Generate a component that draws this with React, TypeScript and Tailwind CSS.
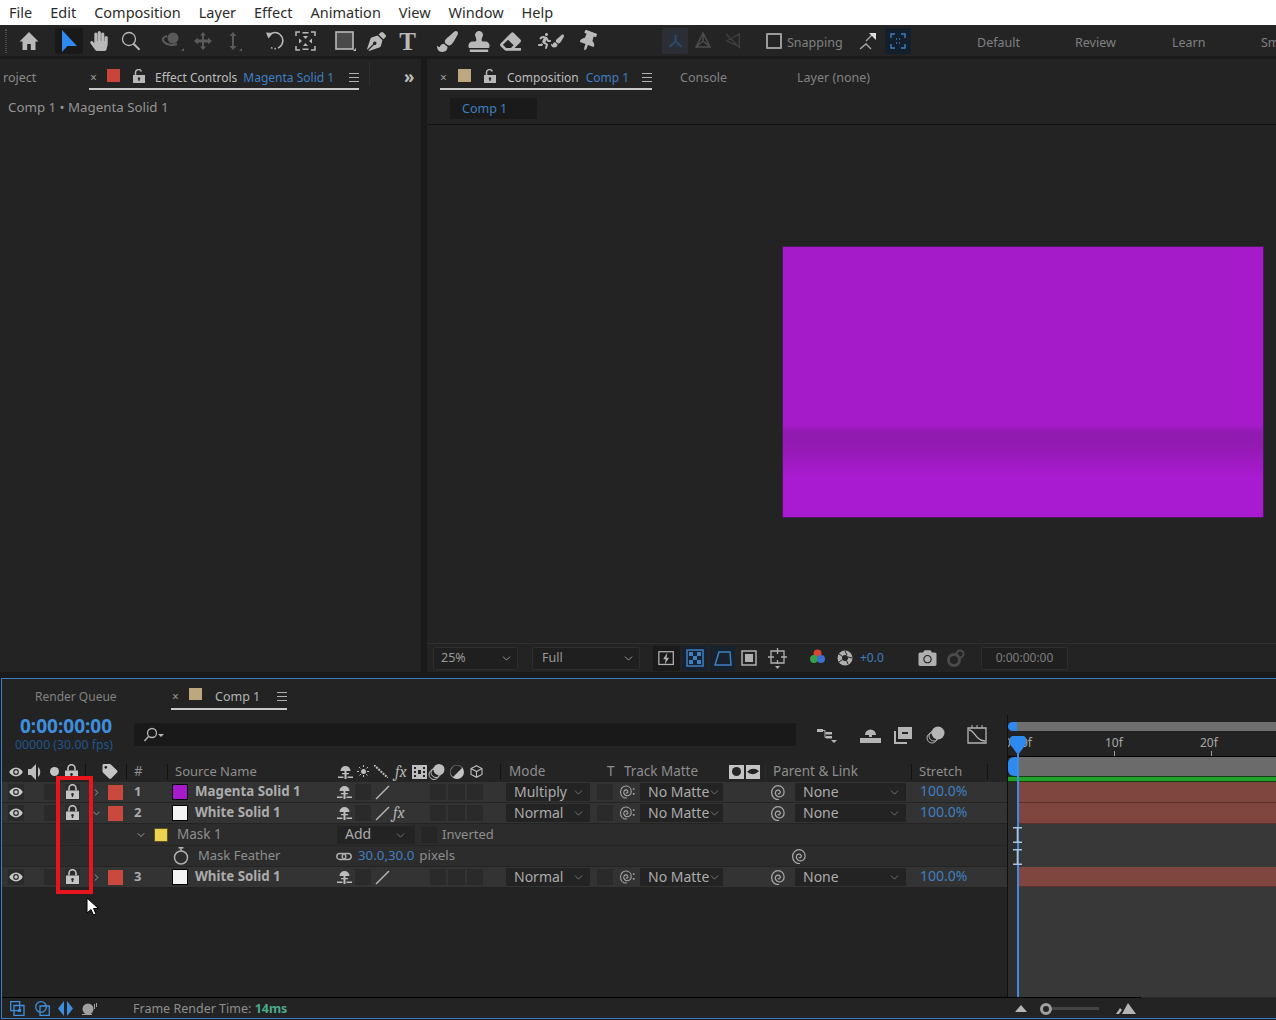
import type { ReactNode } from "react";
import { ChevronDown, ChevronRight } from "lucide-react";
import { FaCamera, FaEraser, FaHandPaper, FaPaintBrush, FaPenNib, FaRunning, FaStamp, FaTag, FaThumbtack } from "react-icons/fa";

const FONT = { fontFamily: '"Noto Sans", "Open Sans", sans-serif' };

function Ic({ c, v = "0 0 20 20", children }: { c: string; v?: string; children: ReactNode }) {
  return (
    <svg viewBox={v} className={`shrink-0 ${c}`} fill="currentColor">
      {children}
    </svg>
  );
}

function Burger({ c }: { c: string }) {
  return (
    <div className={`flex h-[9px] w-[10px] shrink-0 flex-col justify-between ${c}`}>
      <div className="h-px bg-[#b0b0b0]" />
      <div className="h-px bg-[#b0b0b0]" />
      <div className="h-px bg-[#b0b0b0]" />
    </div>
  );
}

function Unlock({ c }: { c: string }) {
  return (
    <Ic c={`h-[14px] w-[12px] text-[#b8b8b8] ${c}`} v="0 0 12 14">
      <path d="M0 6h12v8H0zM6 8.2a1.4 1.4 0 0 0-.6 2.6V12h1.2v-1.2A1.4 1.4 0 0 0 6 8.2z" fillRule="evenodd" />
      <path d="M2.5 6V3.5a3 3 0 0 1 5.8-1" fill="none" stroke="currentColor" strokeWidth="1.5" />
    </Ic>
  );
}

function Lock({ c = "" }: { c?: string }) {
  return (
    <Ic c={`h-[15px] w-[13px] text-[#c4c4c4] ${c}`} v="0 0 13 15">
      <path d="M0 6.5h13V15H0zM6.5 9a1.4 1.4 0 0 0-.7 2.6V13h1.4v-1.4A1.4 1.4 0 0 0 6.5 9z" fillRule="evenodd" />
      <path d="M3 6.5V4.2a3.5 3.5 0 0 1 7 0v2.3" fill="none" stroke="currentColor" strokeWidth="1.6" />
    </Ic>
  );
}

function Eye({ c = "" }: { c?: string }) {
  return (
    <Ic c={`h-[10px] w-[14px] text-[#c8c8c8] ${c}`} v="0 0 14 10">
      <path d="M7 .5C3.8.5 1.4 2.8.2 5c1.2 2.2 3.6 4.5 6.8 4.5s5.6-2.3 6.8-4.5C12.600 2.800 10.200.5 7 .5zm0 1.600a2.900 2.900 0 1 1 0 5.800 2.900 2.900 0 0 1 0-5.800z" fillRule="evenodd" />
      <circle cx="7" cy="5" r="1.700" />
    </Ic>
  );
}

function Shy({ c = "" }: { c?: string }) {
  return (
    <Ic c={`h-[14px] w-[15px] text-[#bdbdbd] ${c}`} v="0 0 15 14">
      <path d="M2.500 6a5 5 0 0 1 10 0z" />
      <path d="M6.500 6h2v8h-2zM4 8h7v1.300H4zM0 11.500h5.500V13H0zM9.500 11.500H15V13H9.500z" />
    </Ic>
  );
}

function Spiral({ c = "", dots = false }: { c?: string; dots?: boolean }) {
  return (
    <Ic c={`h-[15px] w-[15px] text-[#a8a8a8] ${c}`} v={dots ? "1 1.500 14 13" : "1 1.500 12 12"}>
      <path
        d="M6.800 8.500c1 .3 1.900-.6 1.500-1.800C7.900 5.500 6 5 5 6.300c-1 1.500-.5 4 1.800 4.600 2.500.6 4.700-1.200 4.700-3.900C11.500 4 9.300 2 6.700 2 3.800 2 1.500 4.300 1.500 7.500c0 3.300 2.300 5.700 5.500 5.700"
        fill="none"
        stroke="currentColor"
        strokeWidth="1"
        strokeLinecap="round"
      />
      {dots && <path d="M13 4h1.500v1.500H13zM13 8.500h1.500V10H13z" />}
    </Ic>
  );
}

function Slash({ c = "" }: { c?: string }) {
  return (
    <Ic c={`h-[15px] w-[15px] text-[#b5b5b5] ${c}`} v="0 0 15 15">
      <path d="M1 14 14 1" stroke="currentColor" strokeWidth="1.500" fill="none" />
    </Ic>
  );
}

function Fx({ c = "" }: { c?: string }) {
  return <span className={`shrink-0 font-serif text-[16px] italic leading-none text-[#b0b0b0] ${c}`}>fx</span>;
}

function Box({ c }: { c: string }) {
  return <div className={`h-[16px] shrink-0 bg-[#2a2a2a] ${c}`} />;
}

function Select({ label, c, text = "pl-2", chev = "right-[5px]" }: { label: string; c: string; text?: string; chev?: string }) {
  return (
    <div className={`relative flex h-[18px] shrink-0 items-center rounded-[1px] bg-[#232323] pb-[2px] text-[14px] text-[#ababab] ${text} ${c}`}>
      {label}
      <ChevronDown className={`absolute top-[3px] h-[13px] w-[13px] text-[#9a9a9a] ${chev}`} strokeWidth={1.200} />
    </div>
  );
}

function LayerRow({ num, color, name, mode, open, fx, h }: { num: string; color: string; name: string; mode: string; open?: boolean; fx?: boolean; h: string }) {
  return (
    <div className={`flex items-center bg-[#333333] ${h}`}>
      <div className="ml-[6px] flex h-[16px] w-[16px] shrink-0 items-center justify-center bg-[#2a2a2a]">
        <Eye />
      </div>
      <Box c="ml-[20px] w-[12px]" />
      <div className="ml-[9px] flex h-[16px] w-[15px] shrink-0 justify-center bg-[#2c2c2c]">
        <Lock />
      </div>
      <div className="ml-[11px] w-[10px] shrink-0">
        {open ? <ChevronDown className="h-[11px] w-[11px] text-[#9a9a9a]" /> : <ChevronRight className="h-[11px] w-[11px] text-[#9a9a9a]" />}
      </div>
      <div className="ml-[7px] h-[15px] w-[15px] shrink-0 bg-[#c9493c]" />
      <div className="ml-[11px] w-[38px] shrink-0 text-[13px] font-bold text-[#acacac]">{num}</div>
      <div className={`h-[16px] w-[16px] shrink-0 border border-black ${color}`} />
      <div className="ml-[7px] w-[142px] shrink-0 text-[13.300px] font-bold text-[#acacac]">{name}</div>
      <Shy />
      <Box c="ml-[3px] w-[16px]" />
      <Slash c="ml-[4px]" />
      {fx ? <Fx c="ml-[3px] w-[15px]" /> : <div className="ml-[3px] w-[15px] shrink-0" />}
      <Box c="ml-[22px] w-[16px]" />
      <Box c="ml-[2px] w-[17px]" />
      <Box c="ml-[2px] w-[16px]" />
      <Select label={mode} c="ml-[23px] w-[84px]" />
      <Box c="ml-[7px] w-[16px]" />
      <Spiral dots c="ml-[7px]" />
      <Select label="No Matte" c="ml-[5px] w-[83px]" chev="right-[2px]" />
      <Spiral c="ml-[48px]" />
      <Select label="None" c="ml-[9px] w-[111px]" chev="right-[5px]" />
      <div className="ml-[14px] pb-[2px] text-[14px] leading-none text-[#3f7fc1]">100.0%</div>
    </div>
  );
}

function TrackRow({ h, bar }: { h: string; bar?: boolean }) {
  return (
    <div className={`flex ${h}`}>
      <div className="w-[10px] shrink-0 bg-[#2d2d2d]" />
      <div className={`flex-1 ${bar ? "border-b border-[#5e302c] bg-[#7f4640]" : "bg-[#383838]"}`} />
    </div>
  );
}

function IBeam({ c }: { c: string }) {
  return (
    <Ic c={`h-[16px] w-[9px] text-[#a9c4dc] ${c}`} v="0 0 9 16">
      <path d="M0 0h9v1.500H5.300v13H9V16H0v-1.500h3.700v-13H0z" />
    </Ic>
  );
}

function Toolbar() {
  return (
    <div className="flex h-[31px] shrink-0 items-center bg-[#242424] pt-[1px] text-[#b9b9b9]">
      <div className="ml-[5px] h-[24px] w-[3px] border-x border-dotted border-[#4a4a4a]" />
      <Ic c="ml-[12px] h-[20px] w-[20px]">
        <path d="M10 1 .5 10.500h3V19h4.700v-6h3.600v6h4.700v-8.500h3z" />
      </Ic>
      <div className="ml-[9px] h-[24px] w-px bg-[#333]" />
      <div className="ml-[7px] flex h-[26px] w-[28px] shrink-0 items-center justify-center rounded-[2px] bg-[#191919]">
        <Ic c="h-[22px] w-[16px] text-[#2f8af0]" v="0 0 16 22">
          <path d="M1 0v22l5.500-6H16z" />
        </Ic>
      </div>
      <FaHandPaper className="ml-[6px] h-[20px] w-[20px] shrink-0" />
      <Ic c="ml-[12px] h-[20px] w-[20px]">
        <circle cx="8" cy="8" r="6.500" fill="none" stroke="currentColor" strokeWidth="1.300" />
        <path d="m12.500 12.800 6 6" stroke="currentColor" strokeWidth="2" />
      </Ic>
      <div className="ml-[10px] h-[24px] w-px bg-[#333]" />
      <Ic c="ml-[10px] h-[20px] w-[23px] text-[#5a5a5a]" v="0 0 23 20">
        <circle cx="12" cy="7" r="5.500" />
        <path d="M6 5C2 6 .5 8.500 3 11c2.500 2.800 9 4 13 2" fill="none" stroke="currentColor" strokeWidth="2" />
        <path d="M23 17v3h-3z" />
      </Ic>
      <Ic c="ml-[9px] h-[20px] w-[20px] text-[#5a5a5a]">
        <path d="M10 1 7 4.500h2v4H5V6.500L1 10l4 3.500v-2h4v4H7l3 3.500 3-3.500h-2v-4h4v2l4-3.500-4-3.500v2h-4v-4h2z" />
      </Ic>
      <Ic c="ml-[12px] h-[20px] w-[17px] text-[#5a5a5a]" v="0 0 17 20">
        <path d="M8 1 4.500 5H7v10H4.500L8 19l3.500-4H9V5h2.500zM17 17v3h-3z" />
      </Ic>
      <div className="ml-[10px] h-[24px] w-px bg-[#333]" />
      <Ic c="ml-[13px] h-[21px] w-[21px]" v="0 0 21 21">
        <path d="M3 5.500A8 8 0 1 1 2.600 13" fill="none" stroke="currentColor" strokeWidth="1.500" strokeDasharray="30 2 1.500 2 1.500" />
        <path d="M1 1.500 8 2 3.500 7.500z" />
      </Ic>
      <Ic c="ml-[9px] h-[20px] w-[21px]" v="0 0 21 20">
        <path d="M1 5V1h4M16 1h4v4M20 15v4h-4M5 19H1v-4" fill="none" stroke="currentColor" strokeWidth="1.500" />
        <path d="M7.500 1h6v1.500h-6zM7.500 17.500h6V19h-6zM8 5l2.500 3L13 5zM8 15l2.500-3 2.500 3zM4 7.500l3 2.500-3 2.500zM17 7.500 14 10l3 2.500z" />
      </Ic>
      <div className="ml-[9px] h-[24px] w-px bg-[#333]" />
      <Ic c="ml-[10px] h-[20px] w-[21px]" v="0 0 21 20">
        <rect x="1" y="1" width="17" height="17" fill="#4a4a4a" stroke="currentColor" strokeWidth="1.600" />
        <path d="M21 17v3h-3z" />
      </Ic>
      <FaPenNib className="ml-[11px] h-[19px] w-[19px] shrink-0" />
      <div className="ml-[12px] w-[19px] shrink-0 text-center text-[25px] font-bold leading-none" style={{ fontFamily: '"Liberation Serif", serif' }}>
        T
      </div>
      <div className="ml-[10px] h-[24px] w-px bg-[#333]" />
      <FaPaintBrush className="ml-[10px] h-[21px] w-[21px] shrink-0" />
      <FaStamp className="ml-[10px] h-[21px] w-[22px] shrink-0" />
      <FaEraser className="ml-[10px] h-[21px] w-[21px] shrink-0" />
      <div className="ml-[9px] h-[24px] w-px bg-[#333]" />
      <div className="ml-[8px] flex w-[26px] shrink-0 items-center">
        <FaRunning className="h-[18px] w-[13px]" />
        <FaPaintBrush className="h-[16px] w-[13px]" />
      </div>
      <div className="ml-[4px] h-[24px] w-px bg-[#333]" />
      <FaThumbtack className="ml-[10px] h-[20px] w-[20px] rotate-[20deg] shrink-0" />
      <div className="ml-[36px] h-[24px] w-px bg-[#333]" />
      <div className="ml-[28px] flex h-[26px] w-[26px] shrink-0 items-center justify-center rounded-[2px] bg-[#2b2f35]">
        <Ic c="h-[17px] w-[17px] text-[#2b4a6b]">
          <path d="M10 10V2M10 10l-7 6M10 10l7 6" stroke="currentColor" strokeWidth="2.500" fill="none" />
        </Ic>
      </div>
      <Ic c="ml-[5px] h-[20px] w-[20px] text-[#4c4c4c]">
        <path d="M10 2 3 16h14zM10 2v8M3 16l7-6 7 6" stroke="currentColor" strokeWidth="1.500" fill="none" />
      </Ic>
      <Ic c="ml-[11px] h-[18px] w-[18px] text-[#3f3f3f]">
        <path d="M2 2l16 16M3 10l14-8v14zM3 10l14 6" stroke="currentColor" strokeWidth="1.500" fill="none" />
      </Ic>
      <div className="ml-[15px] h-[24px] w-px bg-[#333]" />
      <div className="ml-[9px] h-[16px] w-[16px] shrink-0 rounded-[1px] border-2 border-[#9a9a9a]" />
      <div className="ml-[5px] mt-[5px] w-[54px] shrink-0 text-[12.500px] text-[#808080]">Snapping</div>
      <Ic c="ml-[18px] h-[18px] w-[17px] text-[#aaa]" v="0 0 17 18">
        <path d="M1 17l6-5 5 5" fill="none" stroke="currentColor" strokeWidth="1.300" />
        <path d="M7 9 13 3" stroke="currentColor" strokeWidth="1.300" />
        <path d="M10 1h7v7z" fill="#ddd" />
      </Ic>
      <div className="ml-[9px] flex h-[26px] w-[26px] shrink-0 items-center justify-center rounded-[2px] bg-[#13202c]">
        <Ic c="h-[16px] w-[16px] text-[#3f7fc1]" v="0 0 16 16">
          <path d="M1 5V1h4M11 1h4v4M15 11v4h-4M5 15H1v-4M6 6h1M9 6h1M6 10h1M9 10h1" fill="none" stroke="currentColor" strokeWidth="1.400" />
        </Ic>
      </div>
      <div className="ml-[37px] h-[24px] w-px bg-[#333]" />
      <div className="ml-[29px] mt-[5px] w-[98px] shrink-0 text-[12.500px] text-[#808080]">Default</div>
      <div className="mt-[5px] w-[97px] shrink-0 text-[12.500px] text-[#808080]">Review</div>
      <div className="mt-[5px] w-[89px] shrink-0 text-[12.500px] text-[#808080]">Learn</div>
      <div className="mt-[5px] shrink-0 text-[12.500px] text-[#808080]">Small</div>
    </div>
  );
}

function PanelTabs() {
  return (
    <div className="flex flex-col">
      <div className="flex h-[31px] shrink-0 items-end text-[12px] leading-[18px]">
        <span className="mb-[3px] ml-[3px] w-[86px] shrink-0 text-[12.500px] text-[#8a8a8a]">roject</span>
        <div className="flex h-[31px] w-[270px] shrink-0 items-center border-b-2 border-[#c9c9c9] pt-[8px]">
          <span className="ml-[1px] w-[12px] text-[#9a9a9a]">×</span>
          <div className="mb-[4px] ml-[5px] h-[13px] w-[13px] shrink-0 bg-[#c9453c]" />
          <Unlock c="mb-[4px] ml-[13px]" />
          <span className="ml-[10px] whitespace-nowrap text-[#bdbdbd]">Effect Controls</span>
          <span className="ml-[6px] whitespace-nowrap text-[#3f7fc1]">Magenta Solid 1</span>
          <Burger c="ml-auto" />
        </div>
        <div className="mb-[4px] ml-[10px] h-[24px] w-px bg-[#2e2e2e]" />
        <span className="mb-[4px] ml-[34px] text-[17px] font-bold leading-[18px] text-[#bdbdbd]">»</span>
      </div>
      <div className="mt-[7px] pl-[8px] text-[13.300px] leading-[20px] text-[#949494]">Comp 1 • Magenta Solid 1</div>
    </div>
  );
}

function ViewerBar() {
  return (
    <div className="flex h-[29px] shrink-0 items-center border-t border-[#2f2f2f] bg-[#232323] text-[#b0b0b0]">
      <div className="ml-[6px] flex h-[23px] w-[85px] shrink-0 items-center justify-between rounded-[2px] border border-[#2e2e2e] bg-[#1f1f1f] pl-[7px] pr-[4px] text-[12.500px] text-[#9a9a9a]">
        25%
        <ChevronDown className="h-[13px] w-[13px]" strokeWidth={1.800} />
      </div>
      <div className="ml-[14px] flex h-[23px] w-[108px] shrink-0 items-center justify-between rounded-[2px] border border-[#2e2e2e] bg-[#1f1f1f] pl-[9px] pr-[4px] text-[12.500px] text-[#9a9a9a]">
        Full
        <ChevronDown className="h-[13px] w-[13px]" strokeWidth={1.800} />
      </div>
      <div className="ml-[13px] flex h-[25px] w-[27px] shrink-0 items-center justify-center bg-[#1a1a1a]">
        <Ic c="h-[17px] w-[17px]">
          <rect x="1" y="2" width="17" height="15" fill="none" stroke="currentColor" strokeWidth="1.500" />
          <path d="M11 3 6 11h3l-1 6 5-8h-3z" />
        </Ic>
      </div>
      <div className="ml-[2px] flex h-[25px] w-[25px] shrink-0 items-center justify-center bg-[#17222e]">
        <Ic c="h-[18px] w-[18px] text-[#3f7fc1]" v="0 0 18 18">
          <rect x="1" y="1" width="16" height="16" fill="none" stroke="currentColor" strokeWidth="1.500" />
          <path d="M3 3h4v4H3zM11 3h4v4h-4zM7 7h4v4H7zM3 11h4v4H3zM11 11h4v4h-4z" />
        </Ic>
      </div>
      <div className="ml-[3px] flex h-[25px] w-[25px] shrink-0 items-center justify-center bg-[#17222e]">
        <Ic c="h-[18px] w-[18px] text-[#3f7fc1]" v="0 0 18 18">
          <path d="M5 3h11l1 13H1z" fill="none" stroke="currentColor" strokeWidth="1.500" />
        </Ic>
      </div>
      <Ic c="ml-[6px] h-[16px] w-[16px]" v="0 0 16 16">
        <rect x="1" y="1" width="14" height="14" fill="none" stroke="currentColor" strokeWidth="1.500" />
        <rect x="4" y="4" width="8" height="8" />
      </Ic>
      <Ic c="ml-[11px] h-[21px] w-[19px]" v="0 0 19 21">
        <path d="M3 3h13v12H3zM9.500 0v6M9.500 12v4M0 9h6M13 9h6" fill="none" stroke="currentColor" strokeWidth="1.300" />
        <path d="M7 18h5l-2.500 3z" />
      </Ic>
      <Ic c="ml-[23px] h-[18px] w-[15px]" v="0 0 15 18">
        <circle cx="7.500" cy="4.500" r="4" fill="#d9432f" />
        <circle cx="4" cy="10" r="4" fill="#35a04a" />
        <circle cx="11" cy="10" r="4" fill="#3b6fd0" />
      </Ic>
      <Ic c="ml-[12px] h-[16px] w-[16px]" v="0 0 16 16">
        <circle cx="8" cy="8" r="7.500" />
        <circle cx="8" cy="8" r="3" fill="#232323" />
        <path d="M8 1 10 5M15 8l-4-1M11 14 9.500 10.500M2 12l3.500-2.500M2 4l3.500 2.500" stroke="#232323" strokeWidth="1" />
      </Ic>
      <span className="ml-[7px] w-[26px] shrink-0 text-[12px] text-[#3f7fc1]">+0.0</span>
      <FaCamera className="ml-[32px] h-[18px] w-[19px] shrink-0" />
      <Ic c="ml-[10px] h-[18px] w-[18px] text-[#4a4a4a]" v="0 0 18 18">
        <circle cx="7" cy="11" r="5.500" fill="none" stroke="currentColor" strokeWidth="3" />
        <circle cx="13" cy="5" r="3.500" fill="none" stroke="currentColor" strokeWidth="2" />
      </Ic>
      <div className="ml-[16px] flex h-[23px] w-[87px] shrink-0 items-center justify-center rounded-[2px] border border-[#2e2e2e] bg-[#1f1f1f] text-[12px] text-[#7d7d7d]">
        0:00:00:00
      </div>
    </div>
  );
}

function TimelineHead() {
  return (
    <div className="flex h-[21px] shrink-0 items-center bg-[#242424] text-[13.500px] leading-none text-[#8e8e8e]">
      <Eye c="ml-[7px]" />
      <Ic c="ml-[5px] h-[16px] w-[15px] text-[#bdbdbd]" v="0 0 15 16">
        <path d="M0 5h3l5-5v16l-5-5H0zM10 3c3 2 3 8 0 10" />
      </Ic>
      <div className="ml-[7px] h-[9px] w-[9px] shrink-0 rounded-full bg-[#c4c4c4]" />
      <Lock c="ml-[6px]" />
      <div className="ml-[7px] h-[16px] w-px bg-[#111]" />
      <FaTag className="ml-[16px] h-[15px] w-[16px] shrink-0 text-[#c4c4c4]" />
      <div className="ml-[8px] h-[16px] w-px bg-[#111]" />
      <span className="ml-[7px] w-[33px] shrink-0">#</span>
      <div className="h-[16px] w-px bg-[#111]" />
      <span className="ml-[7px] w-[163px] shrink-0 text-[13px]">Source Name</span>
      <Shy />
      <Ic c="ml-[4px] h-[13px] w-[13px] text-[#bdbdbd]" v="0 0 13 13">
        <circle cx="6.500" cy="6.500" r="2.500" />
        <path d="M6.500 0v13M0 6.500h13M2 2l9 9M11 2l-9 9" stroke="currentColor" strokeWidth="1" strokeDasharray="2 8" />
      </Ic>
      <Ic c="ml-[4px] h-[13px] w-[14px] text-[#bdbdbd]" v="0 0 14 13">
        <path d="M0 0l14 13" stroke="currentColor" strokeWidth="2" strokeDasharray="2 1" />
      </Ic>
      <Fx c="ml-[7px] w-[15px]" />
      <Ic c="ml-[2px] h-[14px] w-[15px] text-[#bdbdbd]" v="0 0 15 14">
        <path d="M0 0h15v14H0zM2 2v2h2V2zm0 4v2h2V6zm0 4v2h2v-2zm9-8v2h2V2zm0 4v2h2V6zm0 4v2h2v-2zM6 5v4h3V5z" fillRule="evenodd" />
      </Ic>
      <Ic c="ml-[1px] h-[16px] w-[17px] text-[#bdbdbd]" v="0 0 17 16">
        <circle cx="6" cy="10.500" r="5" fill="none" stroke="currentColor" />
        <circle cx="8" cy="8.500" r="5" fill="none" stroke="currentColor" />
        <circle cx="11" cy="5.500" r="5.500" />
      </Ic>
      <Ic c="ml-[5px] h-[14px] w-[14px] text-[#c4c4c4]" v="0 0 14 14">
        <path d="M7 0a7 7 0 1 0 0 14A7 7 0 0 0 7 0zm5 3-9 9a6 6 0 0 1-1-9 6 6 0 0 1 10 0z" fillRule="evenodd" />
      </Ic>
      <Ic c="ml-[6px] h-[13px] w-[13px] text-[#bdbdbd]" v="0 0 13 13">
        <path d="M6.500.7 12 3.500v6L6.500 12.300 1 9.500v-6zM1 3.500l5.500 3 5.500-3M6.500 6.500v5.800" fill="none" stroke="currentColor" strokeWidth="1.100" />
      </Ic>
      <div className="ml-[17px] h-[16px] w-px bg-[#111]" />
      <span className="ml-[8px] w-[98px] shrink-0">Mode</span>
      <span className="w-[17px] shrink-0">T</span>
      <span className="w-[105px] shrink-0">Track Matte</span>
      <div className="flex h-[14px] w-[15px] shrink-0 items-center justify-center bg-[#c4c4c4]">
        <div className="h-[9px] w-[9px] rounded-full bg-[#242424]" />
      </div>
      <div className="ml-[2px] flex h-[14px] w-[14px] shrink-0 items-center justify-center bg-[#c4c4c4]">
        <div className="h-[9px] w-[8px] rotate-45 rounded-tl-full rounded-br-full bg-[#242424]" />
      </div>
      <div className="ml-[5px] h-[16px] w-px bg-[#2c2c2c]" />
      <span className="ml-[7px] w-[138px] shrink-0">Parent &amp; Link</span>
      <div className="h-[16px] w-px bg-[#111]" />
      <span className="ml-[7px] w-[68px] shrink-0 text-[13px]">Stretch</span>
      <div className="h-[16px] w-px bg-[#111]" />
    </div>
  );
}

function MaskRows() {
  return (
    <>
      <div className="flex h-[21px] items-center bg-[#2c2c2c] text-[13.500px] text-[#8e8e8e]">
        <Box c="ml-[61px] w-[17px] bg-[#1f1f1f]" />
        <ChevronDown className="ml-[55px] h-[12px] w-[12px] shrink-0 text-[#9a9a9a]" />
        <div className="ml-[7px] h-[14px] w-[14px] shrink-0 border border-[#5c5224] bg-[#ecd24e]" />
        <span className="ml-[9px] w-[160px] shrink-0">Mask 1</span>
        <Select label="Add" c="w-[78px] bg-[#232323]" chev="right-[8px]" />
        <Box c="ml-[6px] w-[16px] bg-[#262626]" />
        <span className="ml-[5px] text-[13px]">Inverted</span>
      </div>
      <div className="h-px bg-[#242424]" />
      <div className="flex h-[20px] items-center bg-[#2c2c2c] text-[13.300px] text-[#8e8e8e]">
        <Ic c="ml-[171px] h-[18px] w-[16px] text-[#b0b0b0]" v="0 0 16 18">
          <circle cx="8" cy="10.500" r="6.500" fill="none" stroke="currentColor" strokeWidth="1.500" />
          <path d="M5.500 .8h5M8 1v3" stroke="currentColor" strokeWidth="1.500" />
        </Ic>
        <span className="ml-[9px] w-[138px] shrink-0 text-[13px]">Mask Feather</span>
        <Ic c="h-[9px] w-[16px] text-[#b0b0b0]" v="0 0 16 9">
          <rect x=".8" y="1.500" width="9" height="6" rx="3" fill="none" stroke="currentColor" strokeWidth="1.400" />
          <rect x="6.200" y="1.500" width="9" height="6" rx="3" fill="none" stroke="currentColor" strokeWidth="1.400" />
        </Ic>
        <span className="ml-[6px] text-[#3f7fc1]">30.0,30.0</span>
        <span className="ml-[5px] w-[373px] shrink-0">pixels</span>
        <Spiral />
      </div>
    </>
  );
}

function TimelineTrack() {
  return (
    <div className="relative flex min-w-0 flex-1 flex-col border-l border-[#101010] bg-[#232323]">
      <div className="mt-[7px] flex h-[9px] shrink-0">
        <div className="h-[9px] w-[9px] shrink-0 rounded-l-full bg-[#2f8af0]" />
        <div className="flex-1 bg-[#6f6f6f]" />
      </div>
      <div className="flex h-[26px] shrink-0 overflow-hidden border-b border-black bg-[#232323] text-[12px] leading-[22px] text-[#a8a8a8]">
        <span className="-ml-[4px] w-[101px] shrink-0 pt-[1px]">0:00f</span>
        <div className="relative w-[95px] shrink-0 pt-[1px]">
          10f
          <div className="absolute bottom-0 left-[9px] h-[5px] w-px bg-[#a0a0a0]" />
        </div>
        <div className="relative w-[96px] shrink-0 pt-[1px]">
          20f
          <div className="absolute bottom-0 left-[11px] h-[5px] w-px bg-[#a0a0a0]" />
        </div>
      </div>
      <div className="flex h-[19px] shrink-0">
        <div className="h-[19px] w-[10px] shrink-0 rounded-l-[6px] bg-[#2f8af0]" />
        <div className="flex-1 bg-[#6b6b6b]" />
      </div>
      <div className="h-[6px] shrink-0 border-y border-[#123f12] bg-[#22a02c]" />
      <TrackRow h="h-[21px]" bar />
      <TrackRow h="h-[21px]" bar />
      <TrackRow h="h-[22px]" />
      <TrackRow h="h-[21px]" />
      <TrackRow h="h-[20px]" bar />
      <TrackRow h="flex-1" />
      <div className="absolute bottom-0 left-[9px] top-[38px] w-[2px] bg-[#3d8ce0]" />
      <Ic c="absolute left-[2px] top-[21px] h-[19px] w-[16px] text-[#2f8af0]" v="0 0 16 19">
        <path d="M2 0h12l2 2v6L8 19 0 8V2z" />
      </Ic>
      <IBeam c="absolute left-[5px] top-[112px]" />
      <IBeam c="absolute left-[5px] top-[134px]" />
    </div>
  );
}

function TimelinePanel() {
  return (
    <div className="relative flex min-h-0 flex-1 flex-col border-y border-l border-[#3a7fc4] bg-[#232323]">
      <div className="flex h-[36px] shrink-0 items-start text-[12px] leading-[18px]">
        <span className="ml-[33px] mt-[9px] w-[136px] shrink-0 text-[#828282]">Render Queue</span>
        <div className="flex h-[31px] w-[116px] shrink-0 items-center border-b-2 border-[#c9c9c9] pt-[6px] text-[#b4b4b4]">
          <span className="ml-[1px] w-[12px] text-[#9a9a9a]">×</span>
          <div className="mb-[6px] ml-[5px] h-[12px] w-[13px] shrink-0 bg-[#bda77f]" />
          <span className="ml-[13px] text-[12.500px]">Comp 1</span>
          <Burger c="ml-auto" />
        </div>
      </div>
      <div className="flex min-h-0 flex-1">
        <div className="flex w-[1005px] shrink-0 flex-col">
          <div className="flex h-[46px] shrink-0 items-center pb-[7px]">
            <div className="ml-[13px] w-[119px] shrink-0 self-start">
              <div className="ml-[5px] text-[19px] font-bold leading-[22px] text-[#3f8ede]">0:00:00:00</div>
              <div className="mt-[1px] text-[12.300px] leading-[14px] text-[#20558c]">00000 (30.00 fps)</div>
            </div>
            <div className="flex h-[23px] w-[662px] shrink-0 items-center rounded-[2px] bg-[#191919] pl-[9px]">
              <Ic c="h-[15px] w-[22px] text-[#b5b5b5]" v="0 0 22 15">
                <circle cx="9" cy="6" r="4.500" fill="none" stroke="currentColor" strokeWidth="1.300" />
                <path d="M5.500 9.500 1.500 14" stroke="currentColor" strokeWidth="1.500" />
                <path d="M15 7h6l-3 3z" />
              </Ic>
            </div>
            <Ic c="ml-[21px] h-[16px] w-[22px] text-[#b5b5b5]" v="0 0 22 16">
              <path d="M0 2h6v3H0zM9 5h6v2.500H9zM9 9h6v2.500H9zM14 13h6l-3 3z" />
              <path d="M6 3.500h2v7h2M8 6h2" stroke="currentColor" fill="none" />
            </Ic>
            <Ic c="ml-[21px] h-[16px] w-[21px] text-[#b5b5b5]" v="0 0 21 16">
              <path d="M5 8a5.500 5.500 0 0 1 11 0h-4v2H9V8zM0 11h21v5H0z" />
            </Ic>
            <Ic c="ml-[12px] h-[18px] w-[19px] text-[#b5b5b5]" v="0 0 19 18">
              <path d="M5 1h14v12H5zM9 6v2h6V6z" fillRule="evenodd" />
              <path d="M1 5h2v11h11v2H1z" />
            </Ic>
            <Ic c="ml-[14px] h-[18px] w-[19px] text-[#b5b5b5]" v="0 0 19 18">
              <circle cx="6" cy="12" r="5" fill="none" stroke="currentColor" />
              <circle cx="8" cy="10" r="5" fill="none" stroke="currentColor" />
              <circle cx="12" cy="7" r="6.500" />
            </Ic>
            <Ic c="ml-[22px] h-[19px] w-[20px] text-[#b5b5b5]" v="0 0 20 19">
              <path d="M1 3h18v15H1z" fill="none" stroke="currentColor" strokeWidth="1.300" />
              <path d="M2 5c6 0 6 11 16 11" fill="none" stroke="currentColor" strokeWidth="1.300" />
              <path d="M5 0v3M10 0v3M15 0v3" stroke="currentColor" />
            </Ic>
          </div>
          <TimelineHead />
          <LayerRow num="1" color="bg-[#a51bc9]" name="Magenta Solid 1" mode="Multiply" h="h-[20px]" />
          <div className="h-px bg-[#242424]" />
          <LayerRow num="2" color="bg-[#f4f4f4]" name="White Solid 1" mode="Normal" open fx h="h-[20px]" />
          <div className="h-px bg-[#242424]" />
          <MaskRows />
          <div className="h-px bg-[#242424]" />
          <LayerRow num="3" color="bg-[#f4f4f4]" name="White Solid 1" mode="Normal" h="h-[20px]" />
          <div className="flex-1 bg-[#232323]" />
        </div>
        <TimelineTrack />
      </div>
      <div className="flex h-[21px] shrink-0">
        <div className="flex w-[1139px] shrink-0 items-center border-t border-black pt-[1px] text-[#3f8ede]">
          <Ic c="ml-[8px] h-[15px] w-[15px]" v="0 0 15 15">
            <path d="M.7.7h9v9h-9zM4 4.500h10v10H4z" fill="none" stroke="currentColor" strokeWidth="1.300" />
            <rect x="8" y="8" width="3" height="3" />
          </Ic>
          <Ic c="ml-[10px] h-[15px] w-[15px]" v="0 0 15 15">
            <circle cx="6" cy="6" r="5.300" fill="none" stroke="currentColor" strokeWidth="1.300" />
            <path d="M5 5h9.300v9.300H5z" fill="none" stroke="currentColor" strokeWidth="1.300" />
          </Ic>
          <Ic c="ml-[8px] h-[15px] w-[15px]" v="0 0 15 15">
            <path d="M6 0v15L0 7.500zM9 0v15l6-7.500z" />
          </Ic>
          <Ic c="ml-[9px] h-[13px] w-[16px] text-[#a0a0a0]" v="0 0 16 13">
            <circle cx="6" cy="7" r="5.500" />
            <path d="M0 12h10v1H0zM12 7V2h1v5zM14 5V1h1v4z" />
          </Ic>
          <span className="ml-[35px] mt-[2px] text-[12.500px] text-[#8e8e8e]">
            Frame Render Time: <span className="font-bold text-[#4aa98a]">14ms</span>
          </span>
          <div className="ml-[728px] flex shrink-0 items-center">
            <Ic c="h-[7px] w-[12px] text-[#b5b5b5]" v="0 0 12 7">
              <path d="M6 0l6 7H0z" />
            </Ic>
            <div className="ml-[13px] h-[12px] w-[12px] shrink-0 rounded-full border-[3px] border-[#a0a0a0]" />
            <div className="h-[3px] w-[47px] shrink-0 bg-[#444]" />
            <Ic c="ml-[16px] h-[11px] w-[21px] text-[#b5b5b5]" v="0 0 21 11">
              <path d="M13 0l8 11H7zM5 5l-4 6h3l3-4z" />
            </Ic>
          </div>
        </div>
        <div className="flex-1 border-t border-[#2c2c2c]" />
      </div>
    </div>
  );
}

export default function App() {
  return (
    <div className="relative flex h-[1020px] w-[1276px] flex-col overflow-hidden bg-[#1a1a1a]" style={FONT}>
      <div className="flex h-[25px] shrink-0 items-center gap-[18px] bg-white pl-[9px] text-[14.500px] text-[#2c2c2c]">
        {["File", "Edit", "Composition", "Layer", "Effect", "Animation", "View", "Window", "Help"].map((m) => (
          <span key={m}>{m}</span>
        ))}
      </div>
      <Toolbar />
      <div className="flex h-[616px] shrink-0 gap-[6px] pt-[3px]">
        <div className="w-[421px] shrink-0 bg-[#232323]">
          <PanelTabs />
        </div>
        <div className="flex min-w-0 flex-1 flex-col bg-[#232323]">
          <div className="flex h-[31px] shrink-0 items-end text-[12px] leading-[18px]">
            <div className="ml-[13px] flex h-[31px] w-[212px] shrink-0 items-center border-b-2 border-[#c9c9c9] pt-[8px]">
              <span className="w-[12px] text-[#9a9a9a]">×</span>
              <div className="mb-[4px] ml-[6px] h-[13px] w-[13px] shrink-0 bg-[#bda77f]" />
              <Unlock c="mb-[4px] ml-[13px]" />
              <span className="ml-[11px] whitespace-nowrap text-[#bdbdbd]">Composition</span>
              <span className="ml-[7px] whitespace-nowrap text-[#3f7fc1]">Comp 1</span>
              <Burger c="ml-auto" />
            </div>
            <span className="mb-[3px] ml-[28px] w-[117px] shrink-0 text-[12.500px] text-[#828282]">Console</span>
            <span className="mb-[3px] text-[12.500px] text-[#828282]">Layer (none)</span>
          </div>
          <div className="flex h-[35px] shrink-0 items-start border-b border-[#111] pl-[23px] pt-[8px]">
            <div className="flex h-[21px] w-[87px] items-center bg-[#1a1a1a] pl-[12px] pt-[2px] text-[12.500px] text-[#3f7fc1]">Comp 1</div>
          </div>
          <div className="min-h-0 flex-1 pl-[356px] pt-[122px]">
            <div className="h-[270px] w-[480px] bg-[linear-gradient(180deg,#a51bc9_0%,#a51bc9_66%,#8f1aae_69%,#971ab8_76%,#a81bd0_85%,#a81bd0_100%)] shadow-[0_0_0_1px_#4a1a5a]" />
          </div>
          <ViewerBar />
        </div>
      </div>
      <div className="mt-[6px] flex h-[341px] shrink-0 pl-px">
        <TimelinePanel />
      </div>
      <div className="pointer-events-none absolute left-[56px] top-[776px] h-[118px] w-[37px] border-[4px] border-[#e8151f]" />
      <Ic c="pointer-events-none absolute left-[86px] top-[897px] h-[19px] w-[13px] text-white" v="0 0 13 19">
        <path d="M1 1v15l4-3.500 2.500 5.500 2.500-1-2.500-5.500H12.500z" stroke="#000" strokeWidth="1" />
      </Ic>
    </div>
  );
}
